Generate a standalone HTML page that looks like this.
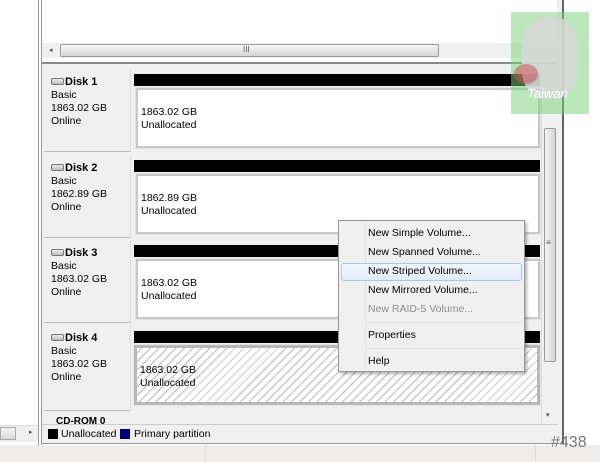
<!DOCTYPE html>
<html><head><style>
*{margin:0;padding:0;box-sizing:border-box}
body{width:600px;height:462px;background:#fff;position:relative;overflow:hidden;font-family:"Liberation Sans",Arial,sans-serif;font-size:10.5px;color:#000}
.a{position:absolute}
.lbl{background:#f0f0f0;border-right:1px solid #ddd;border-bottom:1px solid #bbb;}
.lbl b{font-size:11px}
.lbl div{line-height:13px}
.bar{background:#000;height:12px}
.box{background:#fff;border:2px solid #c8c8c8;outline:1px solid #e4e4e4}
.box div{line-height:13px;position:absolute;left:3px}
.ico{display:inline-block;width:13px;height:7px;border:1px solid #777;border-radius:2px;background:linear-gradient(#eee,#bbb);margin-right:1px;vertical-align:0}
.mi{position:absolute;left:29px;font-size:10.5px}
</style></head><body>
<div class="a" style="left:38px;top:0;width:1px;height:445px;background:#999"></div>
<div class="a" style="left:41px;top:0;width:1px;height:445px;background:#999"></div>
<div class="a" style="left:0;top:425px;width:38px;height:17px;background:#f0f0f0;border-top:1px solid #ddd"></div>
<div class="a" style="left:0;top:427px;width:16px;height:13px;background:linear-gradient(#f4f4f4,#d8d8d8);border:1px solid #aaa"></div>
<div class="a" style="left:29px;top:428px;font-size:7px;color:#555">▸</div>
<div class="a" style="left:42px;top:43px;width:515px;height:15px;background:#f0f0f0"></div>
<div class="a" style="left:49px;top:46px;font-size:7px;color:#444">◂</div>
<div class="a" style="left:60px;top:44px;width:379px;height:13px;background:linear-gradient(#f6f6f6,#d6d6d6);border:1px solid #999;border-radius:2px"></div>
<div class="a" style="left:243px;top:45px;font-size:8px;color:#555">III</div>
<div class="a" style="left:42px;top:62px;width:515px;height:2px;background:#888"></div>
<div class="a" style="left:42px;top:64px;width:499px;height:360px;background:#f0f0f0"></div>

<div class="a lbl" style="left:44px;top:69px;width:87px;height:83px"><div style="position:absolute;left:7px;top:7px"><div><span class="ico"></span><b>Disk 1</b></div><div>Basic</div><div>1863.02 GB</div><div>Online</div></div></div>
<div class="a bar" style="left:134px;top:74px;width:406px"></div>
<div class="a box" style="left:136px;top:88px;width:404px;height:60px"><div style="top:16px">1863.02 GB<br>Unallocated</div></div>

<div class="a lbl" style="left:44px;top:155px;width:87px;height:83px"><div style="position:absolute;left:7px;top:7px"><div><span class="ico"></span><b>Disk 2</b></div><div>Basic</div><div>1862.89 GB</div><div>Online</div></div></div>
<div class="a bar" style="left:134px;top:160px;width:406px"></div>
<div class="a box" style="left:136px;top:174px;width:404px;height:60px"><div style="top:16px">1862.89 GB<br>Unallocated</div></div>

<div class="a lbl" style="left:44px;top:240px;width:87px;height:83px"><div style="position:absolute;left:7px;top:7px"><div><span class="ico"></span><b>Disk 3</b></div><div>Basic</div><div>1863.02 GB</div><div>Online</div></div></div>
<div class="a bar" style="left:134px;top:245px;width:406px"></div>
<div class="a box" style="left:136px;top:259px;width:404px;height:60px"><div style="top:16px">1863.02 GB<br>Unallocated</div></div>

<div class="a lbl" style="left:44px;top:325px;width:87px;height:86px"><div style="position:absolute;left:7px;top:7px"><div><span class="ico"></span><b>Disk 4</b></div><div>Basic</div><div>1863.02 GB</div><div>Online</div></div></div>
<div class="a bar" style="left:134px;top:331px;width:406px"></div>
<div class="a box" style="left:134px;top:345px;width:406px;height:60px;border:3px solid #b8b8b8;background:repeating-linear-gradient(135deg,#fff 0 3px,#bbb 3px 4px,#fff 4px 6px)"><div style="top:16px;background:transparent">1863.02 GB<br>Unallocated</div></div>
<div class="a lbl" style="left:44px;top:413px;width:87px;height:12px;border:none;overflow:hidden"><div style="position:absolute;left:12px;top:2px;font-weight:bold;font-size:10px">CD-ROM 0</div></div>
<div class="a" style="left:541px;top:64px;width:16px;height:360px;background:#f0f0f0;border-left:1px solid #ddd"></div>
<div class="a" style="left:544px;top:128px;width:12px;height:234px;background:linear-gradient(90deg,#f4f4f4,#d4d4d4);border:1px solid #999;border-radius:2px"></div>
<div class="a" style="left:546px;top:238px;font-size:8px;color:#555">≡</div>
<div class="a" style="left:546px;top:411px;font-size:7px;color:#444">▾</div>
<div class="a" style="left:42px;top:424px;width:515px;height:20px;background:#f0f0f0;border-top:1px solid #ccc"></div>
<div class="a" style="left:48px;top:429px;width:10px;height:10px;background:#000"></div>
<div class="a" style="left:61px;top:428px">Unallocated</div>
<div class="a" style="left:120px;top:429px;width:10px;height:10px;background:#00007f"></div>
<div class="a" style="left:134px;top:428px">Primary partition</div>
<div class="a" style="left:42px;top:443px;width:520px;height:1px;background:#999"></div>
<div class="a" style="left:557px;top:0;width:5px;height:444px;background:#f0f0f0"></div>
<div class="a" style="left:562px;top:0;width:2px;height:444px;background:#666"></div>
<div class="a" style="left:0;top:445px;width:600px;height:17px;background:#efedeb"></div>
<div class="a" style="left:205px;top:445px;width:1px;height:17px;background:#ddd"></div>
<div class="a" style="left:535px;top:445px;width:1px;height:17px;background:#ddd"></div>
<div class="a" style="left:551px;top:434px;font-size:16px;color:#777">#438</div>
<div class="a" style="left:511px;top:12px;width:78px;height:102px;background:rgba(120,210,120,.5)"></div>
<div class="a" style="left:522px;top:16px;width:56px;height:84px;border-radius:28px;background:rgba(215,215,215,.85)"></div>
<div class="a" style="left:514px;top:64px;width:24px;height:20px;border-radius:50%;background:rgba(200,80,90,.55)"></div>
<div class="a" style="left:527px;top:86px;font-size:13px;font-style:italic;color:#fff">Taiwan</div>
<div class="a" style="left:338px;top:220px;width:187px;height:152px;background:#f0f0f0;border:1px solid #979797;box-shadow:2px 2px 3px rgba(0,0,0,.3)">
<div class="a" style="left:26px;top:2px;width:1px;height:146px;background:#e2e2e2"></div>
<div class="a" style="left:2px;top:42px;width:181px;height:18px;background:linear-gradient(#f2f6fb,#e2ecf8);border:1px solid #a8c8ea;border-radius:3px"></div>
<div class="mi" style="top:6px">New Simple Volume...</div>
<div class="mi" style="top:25px">New Spanned Volume...</div>
<div class="mi" style="top:44px">New Striped Volume...</div>
<div class="mi" style="top:63px">New Mirrored Volume...</div>
<div class="mi" style="top:82px;color:#8d8d8d">New RAID-5 Volume...</div>
<div class="a" style="left:28px;top:101px;width:155px;height:1px;background:#e0e0e0"></div>
<div class="mi" style="top:108px">Properties</div>
<div class="a" style="left:28px;top:127px;width:155px;height:1px;background:#e0e0e0"></div>
<div class="mi" style="top:134px">Help</div>
</div>
</body></html>
